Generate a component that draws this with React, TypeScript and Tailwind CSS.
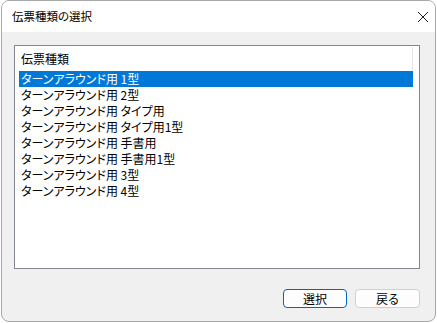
const rows = [
  'ターンアラウンド用 1型',
  'ターンアラウンド用 2型',
  'ターンアラウンド用 タイプ用',
  'ターンアラウンド用 タイプ用1型',
  'ターンアラウンド用 手書用',
  'ターンアラウンド用 手書用1型',
  'ターンアラウンド用 3型',
  'ターンアラウンド用 4型',
];

const font = "font-['Noto_Sans_CJK_JP',sans-serif] [font-feature-settings:'palt']";

export default function App() {
  return (
    <div className={`w-[437px] h-[323px] bg-white overflow-hidden text-black ${font}`}>
      <div className="w-[435px] h-[322px] ml-px rounded-[8px] border border-[#a8a8a8] bg-[#f0f0f0] overflow-hidden flex flex-col">
        <div className="h-[31px] shrink-0 bg-white flex items-center justify-between pl-[10px] pr-[6px]">
          <span className="text-[11.5px] leading-none">伝票種類の選択</span>
          <svg width="12" height="12" viewBox="0 0 12 12">
            <path d="M1 1 L11 11 M11 1 L1 11" stroke="#1a1a1a" strokeWidth="1" />
          </svg>
        </div>
        <div className="flex-1 flex flex-col pl-[12px] pt-[13px]">
          <div className="w-[406px] h-[224px] bg-white border border-[#828790] flex flex-col pl-[4px] pr-[6px]">
            <div className="h-[25px] flex items-center justify-between">
              <span className="pl-[2px] text-[12px] leading-none">伝票種類</span>
              <div className="w-px h-[23px] bg-[#e5e5e5] self-start mt-px" />
            </div>
            {rows.map((r, i) => (
              <div
                key={r}
                className={`h-[16px] flex items-center pl-[2px] text-[12px] leading-none ${
                  i === 0 ? 'bg-[#0078d7] text-white' : ''
                }`}
              >
                {r}
              </div>
            ))}
          </div>
          <div className="flex justify-end gap-[8px] pr-[15px] mt-[20px]">
            <button className="w-[64px] h-[19px] rounded-[4px] border border-[#0067c0] bg-[#fdfdfd] text-[12px] leading-none flex items-center justify-center">
              選択
            </button>
            <button className="w-[65px] h-[19px] rounded-[4px] border border-[#d0d0d0] bg-[#fdfdfd] text-[12px] leading-none flex items-center justify-center">
              戻る
            </button>
          </div>
        </div>
      </div>
    </div>
  );
}
